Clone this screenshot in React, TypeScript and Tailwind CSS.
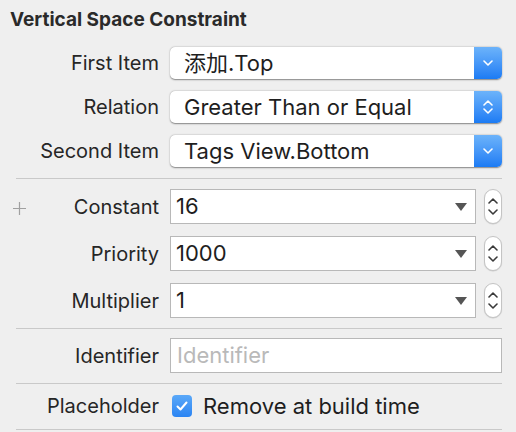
import React from 'react';

const font = { fontFamily: 'Inter, "Noto Sans CJK SC", sans-serif' };

const Chevron = ({ up = false }: { up?: boolean }) => (
  <svg width="10" height="6" viewBox="0 0 10 6" className={up ? 'rotate-180' : ''}>
    <path d="M1 1l4 4 4-4" fill="none" stroke="currentColor" strokeWidth="1.6" strokeLinecap="round" strokeLinejoin="round" />
  </svg>
);

const Label = ({ children }: { children: React.ReactNode }) => (
  <div className="w-[159px] shrink-0 text-right text-[20px] text-[#262626]">{children}</div>
);

const PopUp = ({ value, both = false }: { value: string; both?: boolean }) => (
  <div className="flex h-[32px] w-[332px] rounded-[5px] bg-white shadow-[0_0.5px_1.5px_rgba(0,0,0,0.45)]">
    <div className="flex flex-1 items-center pl-[14px] text-[22px] text-[#1e1e1e]">{value}</div>
    <div className="flex w-[28px] flex-col items-center justify-center gap-[2px] rounded-r-[5px] bg-gradient-to-b from-[#6cb3fa] to-[#1b7bf4] text-white">
      {both && <Chevron up />}
      <Chevron />
    </div>
  </div>
);

const Stepper = () => (
  <div className="ml-[8px] flex h-[35px] w-[18px] flex-col items-center justify-center gap-[5px] rounded-full border border-[#c4c4c4] bg-white text-[#3a3a3a] shadow-[0_0.5px_1px_rgba(0,0,0,0.15)]">
    <Chevron up />
    <Chevron />
  </div>
);

const Combo = ({ value }: { value: string }) => (
  <div className="flex items-center">
    <div className="flex h-[35px] w-[306px] items-center border border-[#b8b8b8] bg-white pl-[5px] text-[22px] text-[#1e1e1e]">
      <span className="flex-1">{value}</span>
      <svg width="12" height="8" viewBox="0 0 12 8" className="mr-[8px]">
        <path d="M0 0h12L6 8z" fill="#555" />
      </svg>
    </div>
    <Stepper />
  </div>
);

const Sep = () => <div className="ml-[16px] mr-[14px] h-px bg-[#c9c9c9]" />;

export default function App() {
  return (
    <div className="h-[432px] w-[516px] overflow-hidden bg-[#efefef]" style={font}>
      <div className="pl-[10px] pt-[8px] text-[19px] font-bold leading-[24px] text-[#2a2a2a]">Vertical Space Constraint</div>

      <div className="mt-[15px] flex items-center gap-[11px]">
        <Label>First Item</Label>
        <PopUp value="添加.Top" />
      </div>
      <div className="mt-[12px] flex items-center gap-[11px]">
        <Label>Relation</Label>
        <PopUp value="Greater Than or Equal" both />
      </div>
      <div className="mt-[12px] flex items-center gap-[11px]">
        <Label>Second Item</Label>
        <PopUp value="Tags View.Bottom" />
      </div>

      <div className="mt-[11px]">
        <Sep />
      </div>

      <div className="relative mt-[10px] flex items-center gap-[11px]">
        {/* add-variation button */}
        <svg width="13" height="13" viewBox="0 0 13 13" className="absolute left-[13px] top-[13px]">
          <path d="M6.5 0v13M0 6.5h13" stroke="#a0a0a0" strokeWidth="1.2" />
        </svg>
        <Label>Constant</Label>
        <Combo value="16" />
      </div>
      <div className="mt-[12px] flex items-center gap-[11px]">
        <Label>Priority</Label>
        <Combo value="1000" />
      </div>
      <div className="mt-[12px] flex items-center gap-[11px]">
        <Label>Multiplier</Label>
        <Combo value="1" />
      </div>

      <div className="mt-[10px]">
        <Sep />
      </div>

      <div className="mt-[9px] flex items-center gap-[11px]">
        <Label>Identifier</Label>
        <div className="flex h-[35px] w-[332px] items-center border border-[#b8b8b8] bg-white pl-[6px] text-[22px] text-[#b9b9b9]">
          Identifier
        </div>
      </div>

      <div className="mt-[10px]">
        <Sep />
      </div>

      <div className="mt-[10px] flex h-[24px] items-center gap-[13px]">
        <Label>Placeholder</Label>
        <div className="flex items-center gap-[11px]">
          <div className="flex h-[22px] w-[20px] items-center justify-center rounded-[4px] bg-gradient-to-b from-[#5aa8f8] to-[#2a84f3]">
            <svg width="12" height="10" viewBox="0 0 12 10">
              <path d="M1.5 5.5l3 3 6-7" fill="none" stroke="white" strokeWidth="2" strokeLinecap="round" strokeLinejoin="round" />
            </svg>
          </div>
          <span className="text-[22px] text-[#1e1e1e]">Remove at build time</span>
        </div>
      </div>

      <div className="mt-[11px]">
        <Sep />
      </div>
    </div>
  );
}
